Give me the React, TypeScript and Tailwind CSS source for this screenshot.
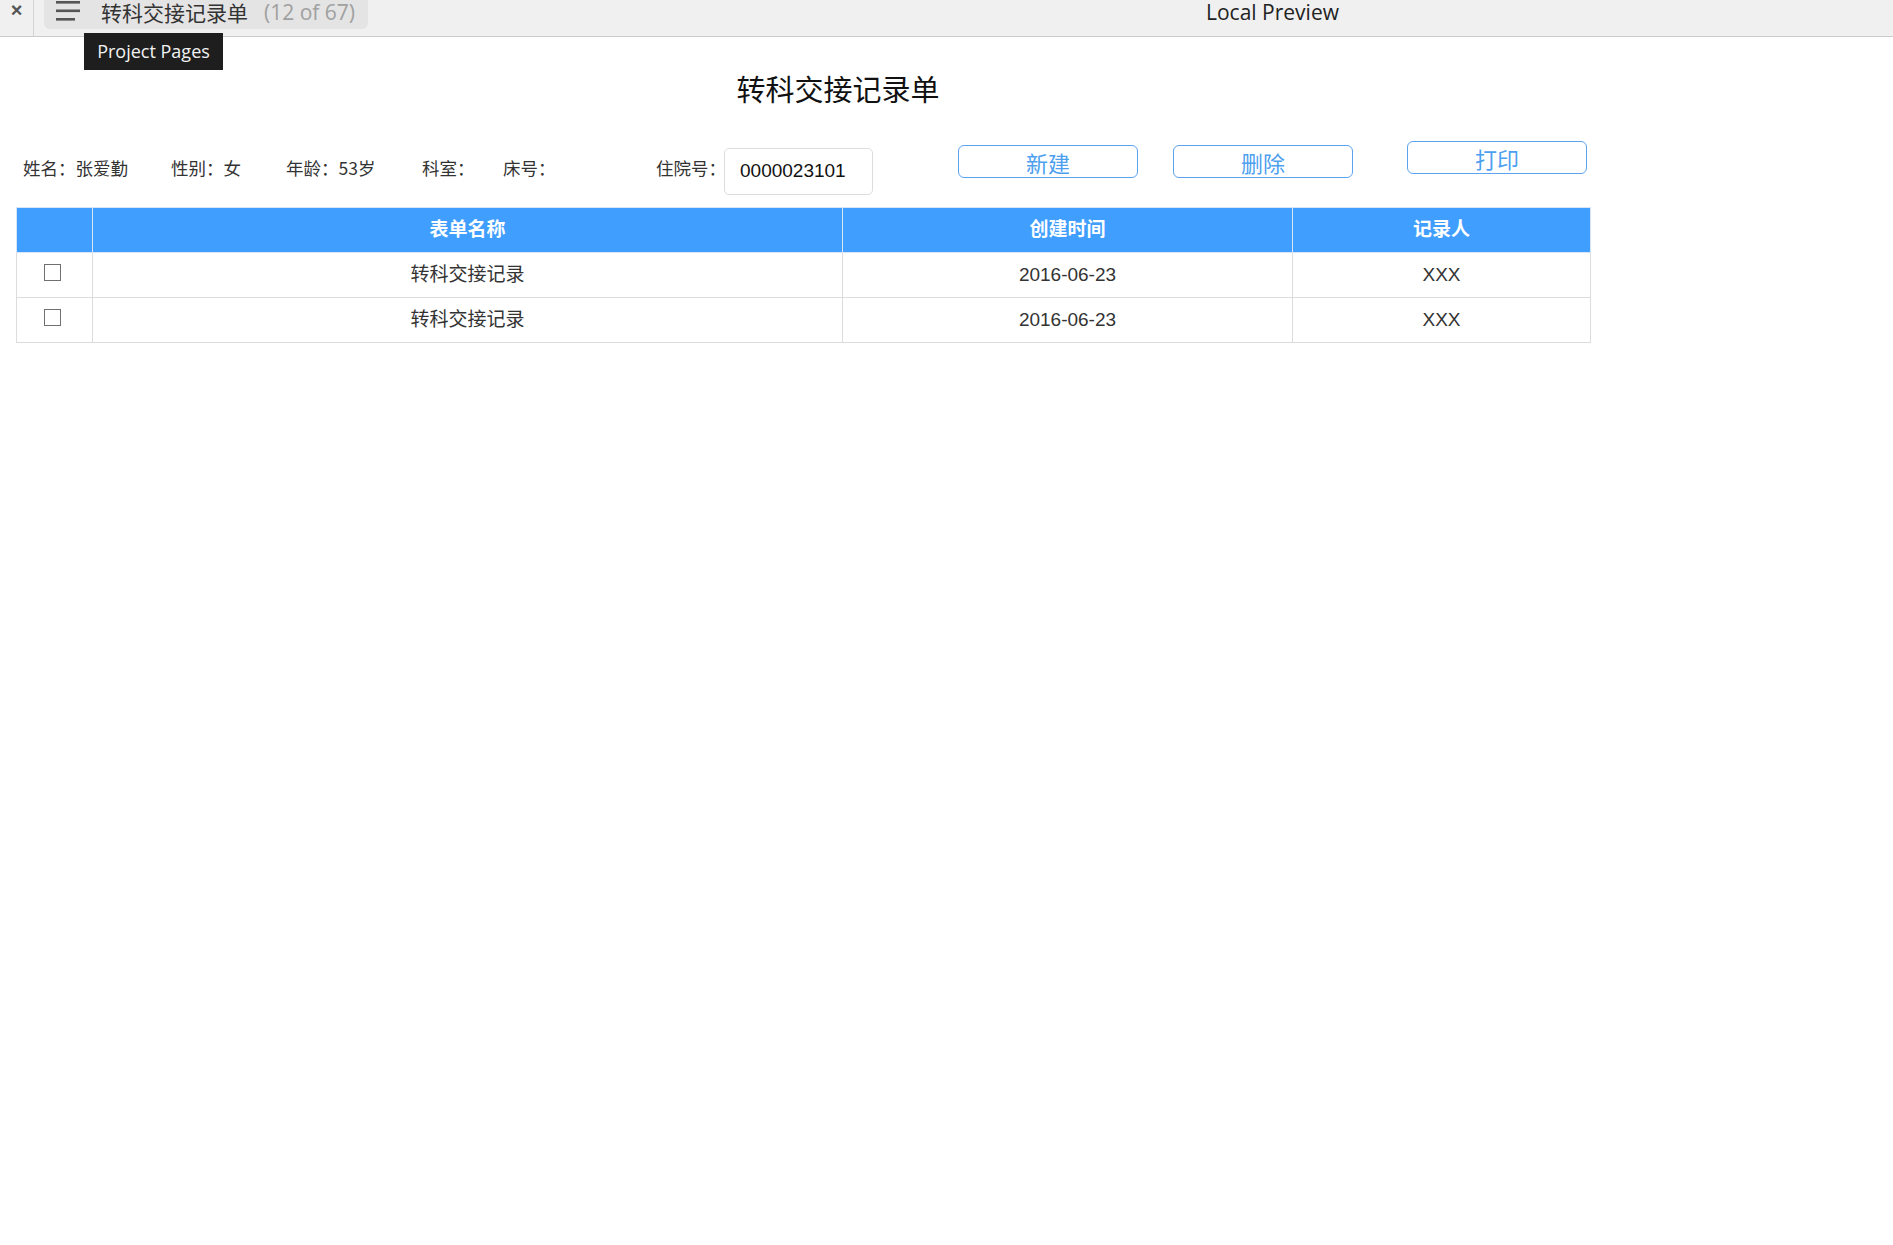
import React from 'react';

const rows = [
  { name: '转科交接记录', date: '2016-06-23', by: 'XXX' },
  { name: '转科交接记录', date: '2016-06-23', by: 'XXX' },
];

const cjk = "font-['Noto_Sans_CJK_SC',sans-serif]";
const sans = "font-['Liberation_Sans','Noto_Sans_CJK_SC',sans-serif]";

const TopBar: React.FC = () => (
  <div className="relative h-[37px] bg-[#f0f0f0] border-b border-[#cccccc] flex items-start">
    <div className="w-[34px] h-full border-r border-[#d4d4d4] flex justify-center">
      <span className="text-[20px] leading-[20px] font-bold text-[#555] font-['Liberation_Sans',sans-serif]">×</span>
    </div>
    <div className="ml-[10px] w-[324px] h-[29px] bg-[#e4e4e4] rounded-b-[6px] flex items-start">
      <svg className="ml-[12px] mt-[1px] w-[24px] h-[22px]" viewBox="0 0 24 22">
        <rect x="0" y="0" width="24" height="2.6" fill="#555" />
        <rect x="0" y="8.5" width="24" height="2.6" fill="#555" />
        <rect x="0" y="17" width="19" height="2.6" fill="#555" />
      </svg>
      <span className={`ml-[21px] text-[21px] leading-[24px] text-[#333] ${cjk}`}>转科交接记录单</span>
      <span className="ml-[16px] text-[21px] leading-[24px] text-[#a0a0a0] font-['Open_Sans',sans-serif]">(12 of 67)</span>
    </div>
    <span className="ml-[838px] text-[21px] leading-[24px] text-[#222] font-['Open_Sans',sans-serif]">Local Preview</span>
    <div className="absolute left-[84px] top-[33px] w-[139px] h-[37px] bg-[#1e1e1e] flex items-center justify-center z-10">
      <span className="text-[18px] text-[#f2f2f2] font-['Open_Sans',sans-serif]">Project Pages</span>
    </div>
  </div>
);

const Btn: React.FC<{ label: string; className?: string }> = ({ label, className }) => (
  <button
    className={`w-[180px] h-[33px] border border-[#5ba3ee] rounded-[6px] bg-white text-[22px] leading-none text-[#4d9ff0] ${cjk} ${className ?? ''}`}
  >
    {label}
  </button>
);

const InfoRow: React.FC = () => (
  <div className={`flex items-start pl-[23px] h-[56px] text-[17.5px] text-[#333] whitespace-nowrap ${cjk}`}>
    <div className="w-[148px] h-[47px] mt-[4px] flex items-center">姓名：张爱勤</div>
    <div className="w-[115px] h-[47px] mt-[4px] flex items-center">性别：女</div>
    <div className="w-[136px] h-[47px] mt-[4px] flex items-center">年龄：53岁</div>
    <div className="w-[81px] h-[47px] mt-[4px] flex items-center">科室：</div>
    <div className="w-[153px] h-[47px] mt-[4px] flex items-center">床号：</div>
    <div className="w-[68px] shrink-0 h-[47px] mt-[4px] flex items-center">住院号：</div>
    <div className="w-[149px] shrink-0 h-[47px] mt-[7px] border border-[#dddddd] rounded-[5px] flex items-center pl-[15px] bg-white">
      <span className={`text-[19px] text-[#111] ${sans}`}>0000023101</span>
    </div>
    <Btn label="新建" className="ml-[85px] mt-[4px] w-[179px]" />
    <Btn label="删除" className="ml-[35px] mt-[4px]" />
    <Btn label="打印" className="ml-[54px]" />
  </div>
);

const RecordTable: React.FC = () => (
  <table className={`ml-[16px] mt-[10px] border-collapse border border-[#dcdcdc] ${sans}`}>
    <thead>
      <tr className="h-[45px] bg-[#409eff] text-white text-[19px] font-bold">
        <th className="w-[76px] border border-[#d6e6f7]"></th>
        <th className="w-[750px] border border-[#d6e6f7]">表单名称</th>
        <th className="w-[450px] border border-[#d6e6f7]">创建时间</th>
        <th className="w-[298px] border border-[#d6e6f7]">记录人</th>
      </tr>
    </thead>
    <tbody>
      {rows.map((r, i) => (
        <tr key={i} className="h-[45px] text-[19px] text-[#333]">
          <td className="border border-[#dcdcdc] text-center">
            <span className="inline-block w-[17px] h-[17px] border border-[#707070] bg-white mt-[-6px] mr-[4px] align-middle"></span>
          </td>
          <td className="border border-[#dcdcdc] text-center">{r.name}</td>
          <td className="border border-[#dcdcdc] text-center">{r.date}</td>
          <td className="border border-[#dcdcdc] text-center">{r.by}</td>
        </tr>
      ))}
    </tbody>
  </table>
);

export default function App() {
  return (
    <div className="min-h-[1245px] bg-white">
      <TopBar />
      <h1 className={`w-[1676px] mt-[35px] text-center text-[29px] leading-[32px] text-[#111] font-normal ${cjk}`}>
        转科交接记录单
      </h1>
      <div className="mt-[37px]">
        <InfoRow />
      </div>
      <RecordTable />
    </div>
  );
}
